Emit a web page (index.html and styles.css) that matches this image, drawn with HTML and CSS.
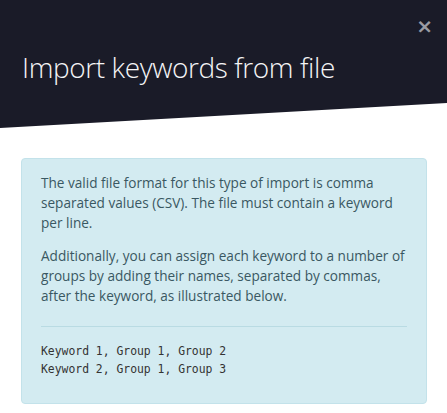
FILE: index.html
```html
<!DOCTYPE html>
<html lang="en">
  <head>
    <meta charset="UTF-8" />
    <meta name="viewport" content="width=device-width, initial-scale=1.0" />
    <title>Import keywords from file</title>
    <link rel="stylesheet" href="styles.css">
  </head>
  <body>
    <div class="modal">
      <div class="modal-header">
        <button class="close" type="button">&times;</button>
        <h1 class="modal-title">Import keywords from file</h1>
      </div>
      <div class="modal-body">
        <div class="alert">
          <p>The valid file format for this type of import is comma separated values (CSV). The file must contain a keyword per line.</p>
          <p>Additionally, you can assign each keyword to a number of groups by adding their names, separated by commas, after the keyword, as illustrated below.</p>
          <hr />
          <pre>Keyword 1, Group 1, Group 2
Keyword 2, Group 1, Group 3</pre>
        </div>
      </div>
    </div>
  </body>
</html>
```

FILE: styles.css
```css
body {
  margin: 0;
  background: #fff;
  font-family: "Open Sans", "Noto Sans", sans-serif;
}
.modal-header {
  position: relative;
  height: 128px;
  padding: 0 22px;
  box-sizing: border-box;
  background-color: #1a1b28;
  clip-path: polygon(0 0, 100% 0, 100% 103px, 0 100%);
  overflow: hidden;
}
.modal-title {
  margin: 0;
  padding-top: 47px;
  color: #f4f4f6;
  font-weight: 300;
  font-size: 28px;
  letter-spacing: -0.4px;
  line-height: 40px;
}
.close {
  position: absolute;
  top: 14px;
  right: 14px;
  padding: 0;
  border: 0;
  background: none;
  color: #9a9ba3;
  font-family: "DejaVu Sans", sans-serif;
  font-size: 20px;
  font-weight: bold;
  line-height: 24px;
}
.modal-body {
  padding: 30px 20px 12px 21px;
}
.alert {
  padding: 14px 19px 25px;
  background-color: #d3ebf1;
  border: 1px solid #c3e2ea;
  border-radius: 4px;
  color: #3a5862;
  font-size: 13.6px;
  line-height: 20px;
}
.alert p {
  margin: 0 0 13px;
}
.alert hr {
  margin: 20px 0 15px;
  border: 0;
  border-top: 1px solid #b9dbe3;
}
.alert pre {
  margin: 0;
  color: #333;
  font-family: "DejaVu Sans Mono", "Liberation Mono", monospace;
  font-size: 11.4px;
  line-height: 18px;
}
```
